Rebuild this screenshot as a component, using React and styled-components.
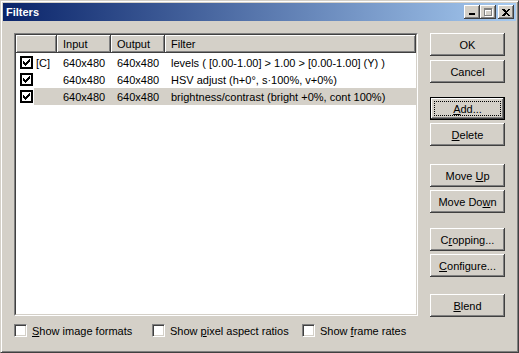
import React from 'react'
import styled, { createGlobalStyle } from 'styled-components'

const Global = createGlobalStyle`
    html, body {
        margin: 0;
        padding: 0;
        background: #d4d0c8;
    }
`

const Window = styled.div`
    width: 519px;
    height: 353px;
    box-sizing: border-box;
    background: #d4d0c8;
    border: 1px solid;
    border-color: #d4d0c8 #404040 #404040 #d4d0c8;
    box-shadow: inset 1px 1px #fff, inset -1px -1px #808080;
    padding: 2px;
    display: flex;
    flex-direction: column;
    font-family: 'Liberation Sans', Arial, sans-serif;
    font-size: 11px;
    color: #000;
`

const TitleBar = styled.div`
    height: 18px;
    display: flex;
    align-items: center;
    padding: 0 2px 0 3px;
    background: linear-gradient(to right, #0a246a, #a6caf0);
`

const Caption = styled.div`
    flex: 1;
    color: #fff;
    font-weight: bold;
    font-size: 11px;
`

const CapButton = styled.div`
    width: 16px;
    height: 14px;
    box-sizing: border-box;
    margin-left: ${(p) => p.$gap || 0}px;
    background: #d4d0c8;
    box-shadow: inset -1px -1px #404040, inset 1px 1px #fff,
        inset -2px -2px #808080, inset 2px 2px #d4d0c8;
    display: flex;
    align-items: center;
    justify-content: center;
    svg {
        display: block;
    }
`

const Client = styled.div`
    flex: 1;
    display: flex;
    padding: 12px 11px 0 11px;
`

const LeftCol = styled.div`
    width: 404px;
    display: flex;
    flex-direction: column;
`

const ListOuter = styled.div`
    height: 283px;
    box-sizing: border-box;
    border: 1px solid;
    border-color: #808080 #fff #fff #808080;
`

const ListInner = styled.div`
    height: 100%;
    box-sizing: border-box;
    border: 1px solid;
    border-color: #404040 #d4d0c8 #d4d0c8 #404040;
    background: #fff;
`

const Header = styled.div`
    display: grid;
    grid-template-columns: 41px 54px 54px 1fr;
    height: 18px;
    margin-bottom: 1px;
`

const HeadCell = styled.div`
    background: #d4d0c8;
    box-shadow: inset -1px -1px #404040, inset 1px 1px #fff,
        inset -2px -2px #808080;
    padding-left: 6px;
    display: flex;
    align-items: center;
`

const Row = styled.div`
    display: flex;
    height: 17px;
`

const CheckCell = styled.div`
    width: 18px;
    padding-left: 4px;
    box-sizing: border-box;
    display: flex;
    align-items: center;
`

const ListCheck = styled.div`
    width: 13px;
    height: 13px;
    box-sizing: border-box;
    border: 2px solid #000;
    background: #fff;
    display: flex;
    align-items: center;
    justify-content: center;
    svg {
        display: block;
    }
`

const Item = styled.div`
    flex: 1;
    display: grid;
    grid-template-columns: 23px 54px 54px 1fr;
    align-items: center;
    background: ${(p) => (p.$selected ? '#d4d0c8' : 'transparent')};
`

const Cell = styled.div`
    padding-left: ${(p) => (p.$first ? 2 : 6)}px;
    white-space: nowrap;
`

const Options = styled.div`
    display: flex;
    align-items: center;
    margin-top: 8px;
`

const Option = styled.label`
    display: flex;
    align-items: center;
    width: ${(p) => (p.$width ? p.$width + 'px' : 'auto')};
`

const Box = styled.span`
    width: 13px;
    height: 13px;
    box-sizing: border-box;
    border: 1px solid;
    border-color: #808080 #fff #fff #808080;
    box-shadow: inset 1px 1px #404040, inset -1px -1px #d4d0c8;
    background: #fff;
    margin-right: 5px;
`

const RightCol = styled.div`
    width: 75px;
    margin-left: 12px;
    display: flex;
    flex-direction: column;
`

const Button = styled.div`
    position: relative;
    height: 23px;
    margin-top: ${(p) => p.$mt || 0}px;
    box-sizing: border-box;
    background: #d4d0c8;
    display: flex;
    align-items: center;
    justify-content: center;
    box-shadow: ${(p) =>
        p.$default
            ? 'inset 0 0 0 1px #000, inset -2px -2px #404040, inset 2px 2px #fff, inset -3px -3px #808080'
            : 'inset -1px -1px #404040, inset 1px 1px #fff, inset -2px -2px #808080, inset 2px 2px #d4d0c8'};
    ${(p) =>
        p.$default &&
        `
        &::after {
            content: '';
            position: absolute;
            inset: 4px;
            border: 1px dotted #000;
        }
    `}
`

const Check = () => (
    <svg width="7" height="7" viewBox="0 0 7 7" shapeRendering="crispEdges">
        <polygon points="0,2 2,4 7,-1 7,2 2,7 0,5" fill="#000" />
    </svg>
)

const rows = [
    { tag: '[C]', filter: 'levels ( [0.00-1.00] > 1.00 > [0.00-1.00] (Y) )' },
    { tag: '', filter: 'HSV adjust (h+0°, s·100%, v+0%)' },
    { tag: '', filter: 'brightness/contrast (bright +0%, cont 100%)', selected: true }
]

export default function App() {
    return (
        <>
            <Global />
            <Window>
                <TitleBar>
                    <Caption>Filters</Caption>
                    <CapButton>
                        <svg width="8" height="8" viewBox="0 0 8 8" shapeRendering="crispEdges">
                            <rect x="1" y="5" width="6" height="2" fill="#000" />
                        </svg>
                    </CapButton>
                    <CapButton>
                        <svg width="10" height="10" viewBox="0 0 10 10" shapeRendering="crispEdges">
                            <path d="M2 2h8v8H2z M3 4v5h6V4z" fill="#fff" fillRule="evenodd" />
                            <path d="M1 1h8v8H1z M2 3v5h6V3z" fill="#808080" fillRule="evenodd" />
                        </svg>
                    </CapButton>
                    <CapButton $gap={2}>
                        <svg width="8" height="7" viewBox="0 0 8 7" shapeRendering="crispEdges">
                            <path d="M0 0h2l2 2 2-2h2L5 3.5 8 7H6L4 5 2 7H0l3-3.5z" fill="#000" />
                        </svg>
                    </CapButton>
                </TitleBar>
                <Client>
                    <LeftCol>
                        <ListOuter>
                            <ListInner>
                                <Header>
                                    <HeadCell />
                                    <HeadCell>Input</HeadCell>
                                    <HeadCell>Output</HeadCell>
                                    <HeadCell>Filter</HeadCell>
                                </Header>
                                {rows.map((r, i) => (
                                    <Row key={i}>
                                        <CheckCell>
                                            <ListCheck>
                                                <Check />
                                            </ListCheck>
                                        </CheckCell>
                                        <Item $selected={r.selected}>
                                            <Cell $first>{r.tag}</Cell>
                                            <Cell>640x480</Cell>
                                            <Cell>640x480</Cell>
                                            <Cell>{r.filter}</Cell>
                                        </Item>
                                    </Row>
                                ))}
                            </ListInner>
                        </ListOuter>
                        <Options>
                            <Option $width={138}>
                                <Box />
                                <span><u>S</u>how image formats</span>
                            </Option>
                            <Option $width={150}>
                                <Box />
                                <span>Show <u>p</u>ixel aspect ratios</span>
                            </Option>
                            <Option>
                                <Box />
                                <span>Show <u>f</u>rame rates</span>
                            </Option>
                        </Options>
                    </LeftCol>
                    <RightCol>
                        <Button>OK</Button>
                        <Button $mt={4}>Cancel</Button>
                        <Button $mt={14} $default>
                            <span><u>A</u>dd...</span>
                        </Button>
                        <Button $mt={3}>
                            <span><u>D</u>elete</span>
                        </Button>
                        <Button $mt={18}>
                            <span>Move <u>U</u>p</span>
                        </Button>
                        <Button $mt={3}>
                            <span>Move Do<u>w</u>n</span>
                        </Button>
                        <Button $mt={15}>
                            <span>C<u>r</u>opping...</span>
                        </Button>
                        <Button $mt={3}>
                            <span><u>C</u>onfigure...</span>
                        </Button>
                        <Button $mt={17}>
                            <span><u>B</u>lend</span>
                        </Button>
                    </RightCol>
                </Client>
            </Window>
        </>
    )
}
